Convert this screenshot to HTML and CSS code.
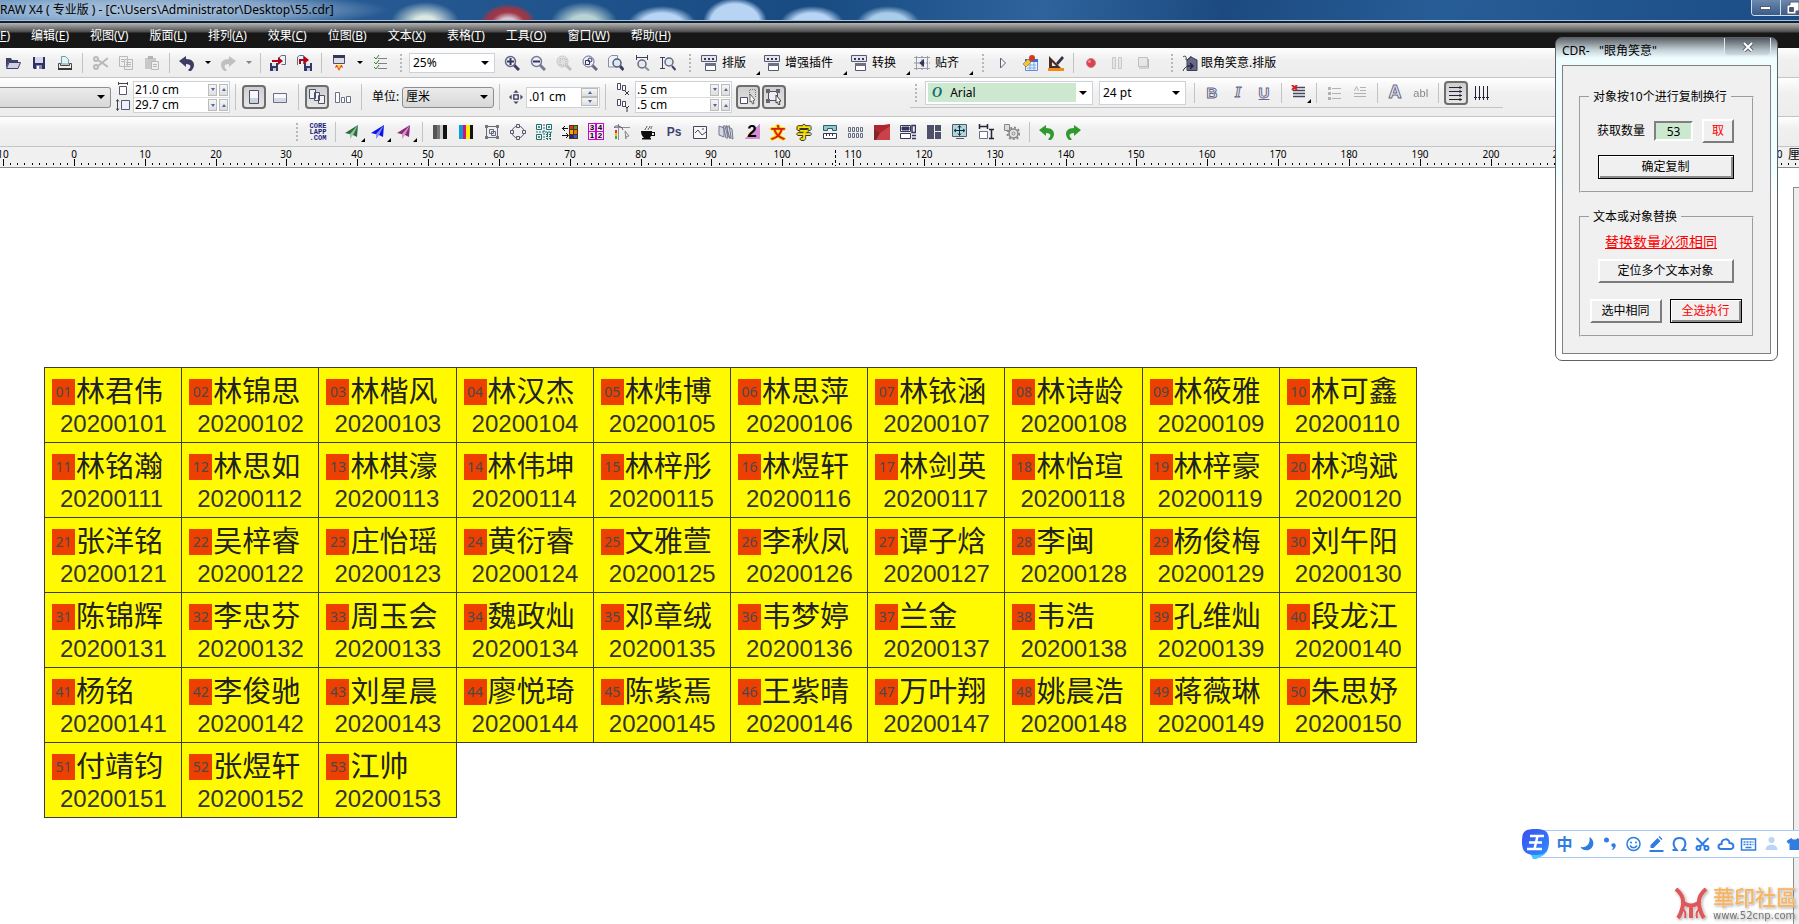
FILE: index.html
```html
<!DOCTYPE html>
<html lang="zh-CN">
<head>
    <meta charset="UTF-8">
    <meta name="viewport" content="width=device-width, initial-scale=1.0">
    <title>55.cdr</title>
    <link rel="stylesheet" href="styles.css">
</head>
<body>
    <header class="titlebar">
        <h1>RAW X4 ( 专业版 ) - [C:\Users\Administrator\Desktop\55.cdr]</h1>
        <div class="window-buttons">
            <button type="button" aria-label="最小化"><svg width="14" height="8" viewBox="0 0 14 8"><rect x="1.500" y="2.500" width="10" height="3" fill="#fff" stroke="#555c70"/></svg></button>
            <button type="button" aria-label="还原"><svg width="14" height="14" viewBox="0 0 14 14"><path d="M4 1h9v9h-3v3H1V4h3z" fill="#fff" stroke="#555c70"/><path d="M3.500 6.500h4v4h-4z" fill="#3b5c88" stroke="#555c70"/></svg></button>
        </div>
    </header>

    <nav class="menubar">
        <a href="#"><u>F</u>)</a>
        <a href="#">编辑(<u>E</u>)</a>
        <a href="#">视图(<u>V</u>)</a>
        <a href="#">版面(<u>L</u>)</a>
        <a href="#">排列(<u>A</u>)</a>
        <a href="#">效果(<u>C</u>)</a>
        <a href="#">位图(<u>B</u>)</a>
        <a href="#">文本(<u>X</u>)</a>
        <a href="#">表格(<u>T</u>)</a>
        <a href="#">工具(<u>O</u>)</a>
        <a href="#">窗口(<u>W</u>)</a>
        <a href="#">帮助(<u>H</u>)</a>
    </nav>

    <!-- 标准工具栏 -->
    <div class="toolbar toolbar-main">
        <button type="button" class="tool" aria-label="打开"><svg viewBox="0 0 16 16"><path d="M1 13V3h5l1 2h6v2H4L1 13z" fill="#3e4266"/><path d="M4 7.500h11.500L13 13.500H1.500z" fill="#cfd2e4" stroke="#3e4266"/></svg></button>
        <button type="button" class="tool" aria-label="保存"><svg viewBox="0 0 16 16"><path d="M2 2h12v12H3l-1-1z" fill="#2f3261"/><path d="M4 2h8v6H4z" fill="#d6d9ee"/><path d="M5 10h6v4H5z" fill="#8489b4"/><path d="M6 11h2v3H6z" fill="#fff"/></svg></button>
        <button type="button" class="tool" aria-label="打印"><svg viewBox="0 0 16 16"><path d="M4.500 9V1.500h4l3 3V9z" fill="#e3f2f2" stroke="#6b9ca5"/><path d="M1.500 8.500h2v2h9v-2h2v5h-13z" fill="#f3f0cf" stroke="#45454f"/><path d="M1 13h14v2H1z" fill="#33343f"/></svg></button>
        <span class="sep"></span>
        <button type="button" class="tool faded" aria-label="剪切"><svg viewBox="0 0 16 16" fill="none" stroke="#777" stroke-width="2"><circle cx="4" cy="4" r="2"/><circle cx="4" cy="12" r="2"/><path d="M6 5l10 7M6 11l10-8"/></svg></button>
        <button type="button" class="tool faded" aria-label="复制"><svg viewBox="0 0 16 16" fill="#eee" stroke="#777"><path d="M1.500 1.500h8v10h-8zM6.500 4.500h8v10h-8z"/><path d="M8 7.500h5M8 9.500h5M8 11.500h5M3 4.500h3M3 6.500h3"/></svg></button>
        <button type="button" class="tool faded" aria-label="粘贴"><svg viewBox="0 0 16 16"><path d="M1 3h11v11H1z" fill="#999"/><path d="M4 1h5v3H4z" fill="#666"/><path d="M7.500 6.500h7v8h-7z" fill="#eee" stroke="#777"/><path d="M9 9.500h4M9 11.500h4" stroke="#777"/></svg></button>
        <span class="sep"></span>
        <button type="button" class="tool" aria-label="撤消"><svg viewBox="0 0 16 16"><path d="M0 6l7-5v3c6 0 8 3 8 6 0 2-1 4-3 6-2 0-2 0-3-1 3-2 4-6-2-6v3z" fill="#3a3d60"/></svg></button>
        <button type="button" class="drop" aria-label="撤消列表"></button>
        <button type="button" class="tool faded" aria-label="重做"><svg viewBox="0 0 16 16"><path d="M16 6L9 1v3C3 4 1 7 1 10c0 2 1 4 3 6 2 0 2 0 3-1-3-2-4-6 2-6v3z" fill="#888"/></svg></button>
        <button type="button" class="drop faded" aria-label="重做列表"></button>
        <span class="sep"></span>
        <button type="button" class="tool" aria-label="导入"><svg viewBox="0 0 16 16"><path d="M9.500 6V2l2-1.500h4v9h-4" fill="#e5f4f5" stroke="#668"/><path d="M0 8h8v8H0z" fill="#343763"/><path d="M2 8h4v3H2z" fill="#e1e4f2"/><path d="M3 13h3v3H3z" fill="#bcd"/><path d="M2 7V5h6V2l5 4-5 4V7z" fill="#b80010"/></svg></button>
        <button type="button" class="tool" aria-label="导出"><svg viewBox="0 0 16 16"><path d="M1.500 10V2l2-1.500h4V9" fill="#e5f4f5" stroke="#668"/><path d="M8 8h8v8H8z" fill="#343763"/><path d="M10 8h4v3h-4z" fill="#e1e4f2"/><path d="M11 13h3v3h-3z" fill="#bcd"/><path d="M3 9V4h5V1l5 4-5 4V6H5v3z" fill="#b80010"/></svg></button>
        <span class="sep"></span>
        <button type="button" class="tool" aria-label="应用程序启动器"><svg viewBox="0 0 16 16"><path d="M2.500.500h11v8h-11z" fill="#dcdce4" stroke="#4b4d69"/><path d="M2 0h12v3H2z" fill="#35385a"/><path d="M5 10h6l1 3-2-1-2 4-2-4-2 1z" fill="#f04000"/><path d="M6 10h4l-2 4z" fill="#ffd42a"/></svg></button>
        <button type="button" class="drop" aria-label="启动器列表"></button>
        <button type="button" class="tool" aria-label="选项"><svg viewBox="0 0 16 16" fill="none"><path d="M6 3.500h9M6 8.500h9M6 13.500h9" stroke="#7b7f92"/><path d="M2 2l2 2 3-4M2 7l2 2 3-4M2 12l2 2 3-4" stroke="#3b7c2d"/></svg></button>
        <span class="grip grip-narrow"></span>
        <span class="combo combo-zoom"><select aria-label="缩放级别"><option>25%</option></select></span>
        <button type="button" class="tool" aria-label="放大"><svg viewBox="0 0 16 16" fill="none"><path d="M10 10l5 5" stroke="#3c3f63" stroke-width="3"/><circle cx="6.500" cy="6.500" r="5" fill="#eef" stroke="#666a80" stroke-width="1.500"/><path d="M3 6.500h7M6.500 3v7" stroke="#33365a" stroke-width="2"/></svg></button>
        <button type="button" class="tool" aria-label="缩小"><svg viewBox="0 0 16 16" fill="none"><path d="M10 10l5 5" stroke="#777b90" stroke-width="3"/><circle cx="6.500" cy="6.500" r="5" fill="#eef" stroke="#777b90" stroke-width="1.500"/><path d="M3 6.500h7" stroke="#33365a" stroke-width="2"/></svg></button>
        <button type="button" class="tool faded" aria-label="缩放选定"><svg viewBox="0 0 16 16" fill="none"><path d="M10 10l5 5" stroke="#888" stroke-width="3"/><circle cx="6.500" cy="6.500" r="5.500" fill="#ccc" stroke="#999"/><path d="M4 4h6v6H4z" stroke="#666" stroke-dasharray="1 1"/></svg></button>
        <button type="button" class="tool" aria-label="缩放全部"><svg viewBox="0 0 16 16" fill="none"><path d="M10 10l5 5" stroke="#666a80" stroke-width="3"/><circle cx="6.500" cy="6.500" r="5.500" fill="#eef" stroke="#666a80"/><path d="M3.500 5.500h4v4h-4z" stroke="#33365a"/><circle cx="8" cy="5" r="2" stroke="#33365a"/></svg></button>
        <button type="button" class="tool" aria-label="缩放页面"><svg viewBox="0 0 16 16" fill="none"><path d="M.500 12V3l3-2.500h6V12z" fill="#eef3f7" stroke="#8a90a4"/><path d="M12 11l3.500 4" stroke="#3c3f63" stroke-width="3"/><circle cx="9" cy="8" r="4" fill="#dce8f2" stroke="#555a72" stroke-width="1.500"/></svg></button>
        <button type="button" class="tool" aria-label="按页宽缩放"><svg viewBox="0 0 16 16" fill="none"><path d="M2 2.500h12M2.500 0v5M13.500 0v5" stroke="#3c3f63"/><path d="M11 12l4 3.500" stroke="#8a8ea0" stroke-width="2"/><circle cx="8" cy="9" r="4" fill="#e5eaf2" stroke="#666a80" stroke-width="1.500"/></svg></button>
        <button type="button" class="tool" aria-label="按页高缩放"><svg viewBox="0 0 16 16" fill="none"><path d="M2.500 2v12M0 2.500h5M0 13.500h5" stroke="#3c3f63"/><path d="M12 11l3.500 4" stroke="#3c3f63" stroke-width="2"/><circle cx="9" cy="7" r="4" fill="#e5eaf2" stroke="#666a80" stroke-width="1.500"/></svg></button>
        <span class="grip"></span>
        <button type="button" class="macro"><svg viewBox="0 0 16 16" fill="none"><path d="M.500.500h15v6H.500z" fill="#e4e5ed" stroke="#55586e"/><path d="M3 3h2v2H3zM7 3h2v2H7zM11 3h2v2h-2z" fill="#33365a"/><path d="M4.500 8.500h10v7h-10z" fill="#fff" stroke="#55586e"/><path d="M4 8h11v3H4z" fill="#6d7188"/></svg>排版<i class="corner"></i></button>
        <button type="button" class="macro"><svg viewBox="0 0 16 16" fill="none"><path d="M.500.500h15v6H.500z" fill="#e4e5ed" stroke="#55586e"/><path d="M3 3h2v2H3zM7 3h2v2H7zM11 3h2v2h-2z" fill="#33365a"/><path d="M4.500 8.500h10v7h-10z" fill="#fff" stroke="#55586e"/><path d="M4 8h11v3H4z" fill="#6d7188"/></svg>增强插件<i class="corner"></i></button>
        <button type="button" class="macro"><svg viewBox="0 0 16 16" fill="none"><path d="M.500.500h15v6H.500z" fill="#e4e5ed" stroke="#55586e"/><path d="M3 3h2v2H3zM7 3h2v2H7zM11 3h2v2h-2z" fill="#33365a"/><path d="M4.500 8.500h10v7h-10z" fill="#fff" stroke="#55586e"/><path d="M4 8h11v3H4z" fill="#6d7188"/></svg>转换<i class="corner"></i></button>
        <button type="button" class="macro"><svg viewBox="0 0 16 16" fill="none"><path d="M2.500 1v14M13.500 1v14M0 2.500h16M0 13.500h16" stroke="#9a9cae"/><path d="M8 1v14M0 8h16" stroke="#8a8da0" stroke-dasharray="2 1"/><path d="M10 4v8L5 8z" fill="#33365a"/></svg>贴齐<i class="corner"></i></button>
        <span class="grip grip-narrow"></span>
        <button type="button" class="tool" aria-label="播放"><svg viewBox="0 0 16 16"><path d="M4.500 3l5 5-5 5z" fill="#f4f4fa" stroke="#5d6078"/></svg></button>
        <button type="button" class="tool" aria-label="编辑宏"><svg viewBox="0 0 16 16"><path d="M3.500 4.500h12v11h-12z" fill="#e8f1ff" stroke="#5b8fd8"/><path d="M3 4h13v3H3z" fill="#2f6fd0"/><path d="M5 10h9M5 13h9M8 7v8M12 7v8" stroke="#7fa8e0"/><circle cx="10" cy="3" r="3" fill="#d8381c"/><path d="M1 9l5-5 3 3-5 5z" fill="#f2c53c" stroke="#a9791a" stroke-width=".700"/></svg></button>
        <button type="button" class="tool" aria-label="宏编辑器"><svg viewBox="0 0 16 16"><path d="M1 13V1l12 12zM4 7v4h4z" fill="#4a2b24" fill-rule="evenodd"/><path d="M8 8l6-7 2 2-6 7z" fill="#303440"/><path d="M0 13h16v3H0z" fill="#f08a10"/></svg></button>
        <span class="sep"></span>
        <button type="button" class="tool" aria-label="录制"><svg viewBox="0 0 16 16"><circle cx="8" cy="8" r="4.500" fill="#e23f4c" stroke="#b98a92"/><circle cx="6.500" cy="6.500" r="1.500" fill="#f58a90"/></svg></button>
        <button type="button" class="tool faded" aria-label="暂停"><svg viewBox="0 0 16 16" fill="#ddd" stroke="#999"><path d="M3.500 2.500h3v11h-3zM9.500 2.500h3v11h-3z"/></svg></button>
        <button type="button" class="tool faded" aria-label="停止"><svg viewBox="0 0 16 16"><path d="M3.500 2.500h9v9h-9z" fill="#ddd" stroke="#888"/><path d="M4 13h9.500V4" fill="none" stroke="#777"/></svg></button>
        <span class="grip grip-wide"></span>
        <button type="button" class="macro macro-tag"><svg viewBox="0 0 16 16" fill="none"><path d="M5 5l4-3 6 3v10.500H5z" fill="#666a86" stroke="#3c3f58"/><path d="M6 11h4M8 8l3 3-3 3" stroke="#22243c" stroke-width="1.500"/><path d="M1 2c2-2 4 0 3 2s4 0 5-3M1 16c1-3 3-4 5-5" stroke="#333"/></svg>眼角笑意.排版</button>
    </div>

    <!-- 属性栏 -->
    <div class="toolbar toolbar-props">
        <span class="combo combo-paper"><select aria-label="纸张类型"><option></option></select></span>
        <div class="pair-icons">
            <svg viewBox="0 0 14 14"><path d="M2.500 1.500h9M2.500 0v3M11.500 0v3" stroke="#444" fill="none"/><path d="M3.500 4.500h7v8h-7z" fill="#fff" stroke="#55586e"/></svg>
            <svg viewBox="0 0 14 14"><path d="M1.500 2v10M0 3.500l1.500-2L3 3.500M0 10.500l1.500 2 1.500-2" stroke="#444" fill="none"/><path d="M5.500 2.500h8v9h-8z" fill="#eef" stroke="#55586e"/></svg>
        </div>
        <div class="pair-fields">
            <div class="spin-field"><input type="text" value="21.0 cm" aria-label="纸张宽度"><button type="button" class="spin down" aria-label="减小宽度"></button><button type="button" class="spin up" aria-label="增大宽度"></button></div>
            <div class="spin-field"><input type="text" value="29.7 cm" aria-label="纸张高度"><button type="button" class="spin down" aria-label="减小高度"></button><button type="button" class="spin up" aria-label="增大高度"></button></div>
        </div>
        <span class="sep sep-tall"></span>
        <button type="button" class="tool pressed" aria-label="纵向"><svg viewBox="0 0 16 16"><path d="M3.500 1.500h9v13h-9z" fill="#f6f8fb" stroke="#4c4f68"/><path d="M4 9h8v5H4z" fill="#ccd2da"/></svg></button>
        <button type="button" class="tool" aria-label="横向"><svg viewBox="0 0 16 16"><path d="M1.500 4.500h13v9h-13z" fill="#f6f8fb" stroke="#6b6e88"/><path d="M2 9h12v4H2z" fill="#d6dae2"/></svg></button>
        <span class="sep sep-tall"></span>
        <button type="button" class="tool pressed" aria-label="所有页面"><svg viewBox="0 0 16 16" fill="#f1f2f6" stroke="#4c4f68"><path d="M.500.500h6v9h-6zM5.500 3.500h5v8h-5zM9.500 6.500h6v8h-6z"/></svg></button>
        <button type="button" class="tool" aria-label="当前页面"><svg viewBox="0 0 16 16" fill="#fff" stroke="#6b6e88"><path d="M.500 3.500h4v10h-4zM6.500 8.500h3v5h-3zM11.500 7.500h4v6h-4z"/></svg></button>
        <span class="sep sep-tall"></span>
        <label for="unit" class="unit-label">单位:</label>
        <span class="combo combo-unit"><select id="unit"><option>厘米</option></select></span>
        <span class="sep sep-tall"></span>
        <div class="nudge-icon"><svg width="14" height="14" viewBox="0 0 16 16"><path d="M5.500 5.500h5v5h-5z" fill="none" stroke="#33365a" stroke-width="1.500"/><path d="M8 0l3 3H5zM8 16l3-3H5zM0 8l3-3v6zM16 8l-3-3v6z" fill="#44475f"/></svg></div>
        <div class="nudge"><input type="text" value=".01 cm" aria-label="微调偏移"><div class="spin-stack"><button type="button" class="spin up" aria-label="增大微调"></button><button type="button" class="spin down" aria-label="减小微调"></button></div></div>
        <span class="sep sep-tall"></span>
        <div class="pair-icons pair-icons-wide">
            <svg viewBox="0 0 14 14"><path d="M1.500 1.500h3v6h-3zM6.500 3.500h3v5h-3z" fill="#fff" stroke="#44475f"/><path d="M9 9l4 4M13 9l-4 4" stroke="#333"/></svg>
            <svg viewBox="0 0 14 14"><path d="M1.500 1.500h3v6h-3zM6.500 3.500h3v5h-3z" fill="#fff" stroke="#44475f"/><path d="M9 8l2 2 2-2M11 10v4" stroke="#333" fill="none"/></svg>
        </div>
        <div class="pair-fields">
            <div class="spin-field"><input type="text" value=".5 cm" aria-label="再制距离 X"><button type="button" class="spin down" aria-label="减小 X"></button><button type="button" class="spin up" aria-label="增大 X"></button></div>
            <div class="spin-field"><input type="text" value=".5 cm" aria-label="再制距离 Y"><button type="button" class="spin down" aria-label="减小 Y"></button><button type="button" class="spin up" aria-label="增大 Y"></button></div>
        </div>
        <button type="button" class="tool pressed pressed-first" aria-label="绘制时移动"><svg viewBox="0 0 16 16" fill="none"><path d="M.500 8.500h7v6h-7z" fill="#fff" stroke="#4c4f68"/><path d="M9.500 6V.500h6v8" stroke="#777" stroke-dasharray="1 1"/><path d="M10 5l5 6-2 .500 1 3-1.500.500-1-3L10 13z" fill="#fff" stroke="#666"/></svg></button>
        <button type="button" class="tool pressed" aria-label="视为已填充"><svg viewBox="0 0 16 16" fill="none"><path d="M2.500 2.500h9v9h-9z" fill="#eee" stroke="#4c4f68"/><path d="M0 0h4v4H0zM10 0h4v4h-4zM0 10h4v4H0z" fill="#667"/><path d="M10 6l5 6-2 .500 1 3-1.500.500-1-3L10 14z" fill="#fff" stroke="#444"/></svg></button>

        <div class="text-bar">
            <span class="grip"></span>
            <span class="combo combo-font"><b>O</b><select aria-label="字体"><option>Arial</option></select></span>
            <span class="combo combo-size"><select aria-label="字号"><option>24 pt</option></select></span>
            <span class="sep"></span>
            <button type="button" class="tool letter outline bold" aria-label="粗体">B</button>
            <button type="button" class="tool letter outline slant" aria-label="斜体">I</button>
            <button type="button" class="tool letter outline under" aria-label="下划线">U</button>
            <span class="sep"></span>
            <button type="button" class="tool has-corner" aria-label="对齐"><svg viewBox="0 0 16 16" fill="none"><path d="M4 2.500h10M2 5.500h12M2 8.500h12M2 11.500h12" stroke="#44475f" stroke-width="1.500"/><path d="M1 0l5 5M6 0L1 5" stroke="#e02020" stroke-width="2"/></svg><i class="corner"></i></button>
            <span class="sep"></span>
            <button type="button" class="tool faded" aria-label="项目符号"><svg viewBox="0 0 16 16" fill="none" stroke="#666"><path d="M6 3.500h9M6 8.500h9M6 13.500h9"/><path d="M2 3.500h3M2 8.500h3M2 13.500h3" stroke-width="3"/></svg></button>
            <button type="button" class="tool faded" aria-label="首字下沉"><svg viewBox="0 0 16 16" fill="none" stroke="#666"><path d="M8 2.500h6M8 5.500h6M2 8.500h12M2 11.500h12"/><path d="M2.500 6l2-4.500 2 4.500"/></svg></button>
            <span class="sep"></span>
            <button type="button" class="tool letter outline wide-a" aria-label="字符格式">A</button>
            <button type="button" class="tool letter faded" aria-label="编辑文本">abI</button>
            <span class="sep"></span>
            <button type="button" class="tool pressed" aria-label="水平文本"><svg viewBox="0 0 16 16" fill="none" stroke="#22243c"><path d="M1 2.500h13M1 6.500h13M1 10.500h13M1 14.500h13"/><path d="M12 1v3M12 5v3M12 9v3M12 13v3"/></svg></button>
            <button type="button" class="tool" aria-label="垂直文本"><svg viewBox="0 0 16 16" fill="none" stroke="#22243c"><path d="M1.500 1v14M5.500 1v14M9.500 1v14M13.500 1v14"/><path d="M0 12.500h3M4 12.500h3M8 12.500h3M12 12.500h3"/></svg></button>
        </div>
    </div>

    <!-- 插件工具栏 -->
    <div class="toolbar toolbar-plugins">
        <span class="grip grip-narrow"></span>
        <button type="button" class="tool corelapp">CORE<br>LAPP<br>.COM</button>
        <span class="sep"></span>
        <button type="button" class="tool has-corner" aria-label="绿色飞机"><svg viewBox="0 0 16 16"><path d="M0 9L13 1l-1 12-4-2z" fill="#2d6e3f"/><path d="M13 1L5 10v5l3-4z" fill="#9cc7a4"/></svg><i class="corner"></i></button>
        <button type="button" class="tool has-corner" aria-label="蓝色飞机"><svg viewBox="0 0 16 16"><path d="M0 9L13 1l-1 12-4-2z" fill="#0a14e6"/><path d="M13 1L5 10v5l3-4z" fill="#8a90ff"/></svg><i class="corner"></i></button>
        <button type="button" class="tool has-corner" aria-label="紫色飞机"><svg viewBox="0 0 16 16"><path d="M0 9L13 1l-1 12-4-2z" fill="#8d2a7c"/><path d="M13 1L5 10v5l3-4z" fill="#cf9ac6"/></svg><i class="corner"></i></button>
        <span class="sep"></span>
        <button type="button" class="tool" aria-label="灰度"><svg viewBox="0 0 16 16"><path d="M1 1h4v14H1z" fill="#555"/><path d="M5 1h3v14H5z" fill="#777"/><path d="M8 1h3v14H8z" fill="#ccc"/><path d="M11 1h4v14h-4z" fill="#111"/></svg></button>
        <button type="button" class="tool" aria-label="CMYK"><svg viewBox="0 0 16 16"><path d="M1 1h4v14H1z" fill="#0a9bd8"/><path d="M5 1h3v14H5z" fill="#d5127c"/><path d="M8 1h4v14H8z" fill="#fff000"/><path d="M12 1h3v14h-3z" fill="#111"/></svg></button>
        <button type="button" class="tool" aria-label="群组"><svg viewBox="0 0 16 16" fill="none" stroke="#666a80"><path d="M2 2.500h12M2 13.500h12M2.500 2v12M13.500 2v12"/><path d="M1 1h3v3H1zM12 1h3v3h-3zM1 12h3v3H1zM12 12h3v3h-3z" fill="#777" stroke="none"/><path d="M5.500 5.500h4v4h-4zM7.500 7.500h4v4h-4z"/></svg></button>
        <button type="button" class="tool" aria-label="圆形"><svg viewBox="0 0 16 16" fill="none" stroke="#55586e"><circle cx="8" cy="8" r="6"/><path d="M6.500.500h3v3h-3zM6.500 12.500h3v3h-3zM.500 6.500h3v3h-3zM12.500 6.500h3v3h-3z" fill="#eee"/></svg></button>
        <button type="button" class="tool" aria-label="二维码"><svg viewBox="0 0 16 16" fill="none" stroke="#1d6e6e"><path d="M.500.500h5v5h-5zM10.500.500h5v5h-5zM.500 10.500h5v5h-5z"/><path d="M2.500 2.500h1v1h-1zM12.500 2.500h1v1h-1zM2.500 12.500h1v1h-1z"/><path d="M8 0v16M0 8h16M10 10.500h6M10 12.500h6M10 14.500h6M11.500 8v8M14.500 8v8" stroke-dasharray="2 1"/></svg></button>
        <button type="button" class="tool" aria-label="颜色替换"><svg viewBox="0 0 16 16"><path d="M0 4.500h6M3 2L.500 4.500 3 7M0 11.500h6M4 9l2.500 2.500L4 14" fill="none" stroke="#111"/><path d="M7 1h9v14H7z" fill="#553018"/><path d="M8 2h3v3H8z" fill="#e03020"/><path d="M12 2h3v3h-3z" fill="#50a030"/><path d="M8 6h3v4H8z" fill="#f0b000"/><path d="M12 6h3v4h-3z" fill="#e07a10"/><path d="M8 11h3v3H8z" fill="#2a2090"/><path d="M12 11h3v3h-3z" fill="#2b60d0"/></svg></button>
        <button type="button" class="tool numbers" aria-label="编号"><span>3</span><span>4</span><span>1</span><span>2</span></button>
        <button type="button" class="tool" aria-label="辅助线"><svg viewBox="0 0 16 16" fill="none"><path d="M0 3.500h16M4.500 0v16" stroke="#8a8da0"/><path d="M0 4c0-3 8-3 9 2" stroke="#556"/><path d="M1 6h2v3H1z" fill="#e03030"/><path d="M1 9h2v3H1z" fill="#f0c000"/><path d="M1 12h2v3H1z" fill="#30b040"/><path d="M11 7l4 5-3 .500V15z" fill="#eee" stroke="#888"/></svg></button>
        <button type="button" class="tool" aria-label="咖啡"><svg viewBox="0 0 16 16"><path d="M1 7h11v1h3v4h-4l-1 2H4c-2-2-3-4-3-7zm11 2v2h2V9z" fill="#0b0b0b" fill-rule="evenodd"/><path d="M2 14h9v1.500H2z" fill="#0b0b0b"/><path d="M5 6c0-2 2-2 2-4M8 6c0-2 2-2 2-4M11 5c0-2 1-2 1-3" fill="none" stroke="#555"/></svg></button>
        <button type="button" class="tool letter ps">Ps</button>
        <button type="button" class="tool" aria-label="位图"><svg viewBox="0 0 16 16" fill="none" stroke="#44475f"><path d="M1.500 2.500h13v12h-13z" fill="#f8f8f8"/><path d="M3 9l3-3 4 5 4-3"/><path d="M10 5h2"/></svg></button>
        <button type="button" class="tool" aria-label="镜像"><svg viewBox="0 0 16 16" fill="none" stroke="#74788f"><path d="M1 2l5 2v9L1 11zM8 14L5 2h2l3 12zM9 2l5 3 1 10-5-3z" fill="#d5d8e4"/><path d="M8 1l4 14M11 1l2 12"/></svg></button>
        <button type="button" class="tool letter two" aria-label="工具 2">2</button>
        <button type="button" class="tool letter wen">文</button>
        <button type="button" class="tool letter zi">字</button>
        <button type="button" class="tool" aria-label="测量"><svg viewBox="0 0 16 16" fill="none"><path d="M1.500 6.500v-5h13v5h-4v-2h-5v2z" fill="#8fcaca" stroke="#2d5f68"/><path d="M1.500 9.500h13v5h-13z" fill="#fff" stroke="#33365a"/><path d="M4.500 10v2M7.500 10v2M10.500 10v2" stroke="#33365a"/></svg></button>
        <button type="button" class="tool" aria-label="阵列"><svg viewBox="0 0 16 16" fill="none" stroke="#666a80"><path d="M.500 3.500h2v4h-2zM4.500 3.500h2v4h-2zM8.500 3.500h2v4h-2zM12.500 3.500h2v4h-2zM.500 9.500h2v4h-2zM4.500 9.500h2v4h-2zM8.500 9.500h2v4h-2zM12.500 9.500h2v4h-2z"/></svg></button>
        <button type="button" class="tool" aria-label="红旗"><svg viewBox="0 0 16 16"><path d="M0 1h16v15H0z" fill="#c8414b"/><path d="M0 1h9l7-1v2L6 9 0 5z" fill="#b0242f"/><path d="M0 5l6 4-4 7H0z" fill="#7f252c"/></svg></button>
        <button type="button" class="tool" aria-label="版式"><svg viewBox="0 0 16 16" fill="none" stroke="#33365a"><path d="M.500 1.500h10v6H.500zM.500 9.500h10v5H.500z" fill="#fff"/><path d="M2 3h7v3H2z" fill="#33365a"/><path d="M12 1.500h3.500v7H12zM12 11.500h4M12 14.500h4" stroke-width="1.500"/></svg></button>
        <button type="button" class="tool" aria-label="拼版"><svg viewBox="0 0 16 16" fill="#4d5068"><path d="M1 1h7v14H1zM9 1h6v6H9zM9 8h6v7H9z"/></svg></button>
        <button type="button" class="tool" aria-label="居中"><svg viewBox="0 0 16 16" fill="none"><path d="M.500.500h14v12H.500z" fill="#a9dada" stroke="#55586e"/><path d="M7.500 2v9M3 6.500h9M6 3.500l1.500-2 1.500 2M6 9.500l1.500 2 1.500-2M4 5L2 6.500 4 8M11 5l2 1.500L11 8" stroke="#22243c"/><path d="M4 14.500h8" stroke="#55586e"/></svg></button>
        <button type="button" class="tool" aria-label="尺寸"><svg viewBox="0 0 16 16" fill="none" stroke="#22243c"><path d="M1.500 0v5M9.500 0v5M1 2.500h9" stroke-width="1.500"/><path d="M1.500 7.500h8v7h-8z" fill="#fff" stroke="#6b6e88"/><path d="M11 5.500h5M11 14.500h5M13.500 6v8" stroke-width="1.500"/></svg></button>
        <button type="button" class="tool" aria-label="设置"><svg viewBox="0 0 16 16" fill="none" stroke="#888"><path d="M.500.500h5v6h-5z" fill="#ddd"/><circle cx="9.500" cy="9.500" r="4.500" fill="#e4e4e4" stroke-width="1.500"/><circle cx="9.500" cy="9.500" r="6" stroke-width="2" stroke-dasharray="2 2"/><circle cx="9.500" cy="9.500" r="1.500"/></svg></button>
        <span class="sep"></span>
        <button type="button" class="tool" aria-label="后退"><svg viewBox="0 0 16 16"><path d="M0 6l7-5v3c6 0 8 3 8 6 0 2-1 4-3 6-2 0-2 0-3-1 3-2 4-6-2-6v3z" fill="#2f9b2f"/></svg></button>
        <button type="button" class="tool" aria-label="前进"><svg viewBox="0 0 16 16"><path d="M16 6L9 1v3C3 4 1 7 1 10c0 2 1 4 3 6 2 0 2 0 3-1-3-2-4-6 2-6v3z" fill="#2f9b2f"/></svg></button>
    </div>

    <svg class="ruler" id="ruler" height="21"></svg>

    <main class="workspace">
        <div class="canvas">
            <div class="cards" id="cards"></div>
        </div>
        <aside class="docker"></aside>
    </main>

    <!-- 宏窗口 -->
    <section class="dialog">
        <div class="dialog-title">
            <h2>CDR- &nbsp; "眼角笑意"</h2>
            <button type="button" class="dialog-close" aria-label="关闭"><svg width="12" height="10" viewBox="0 0 12 10"><path d="M2 1l8 8M10 1L2 9" stroke="#5b6270" stroke-width="4"/><path d="M2 1l8 8M10 1L2 9" stroke="#fff" stroke-width="2"/></svg></button>
        </div>
        <form class="dialog-body">
            <fieldset>
                <legend>对象按10个进行复制换行</legend>
                <div class="count-row">
                    <label for="count">获取数量</label>
                    <input type="text" id="count" value="53">
                    <button type="button" class="btn red">取</button>
                </div>
                <button type="button" class="btn btn-wide default">确定复制</button>
            </fieldset>
            <fieldset>
                <legend>文本或对象替换</legend>
                <a href="#" class="notice">替换数量必须相同</a>
                <button type="button" class="btn btn-wide">定位多个文本对象</button>
                <div class="btn-row">
                    <button type="button" class="btn">选中相同</button>
                    <button type="button" class="btn red default">全选执行</button>
                </div>
            </fieldset>
        </form>
    </section>

    <!-- 输入法状态栏 -->
    <div class="ime">
        <svg class="ime-logo" viewBox="0 0 27 30"><defs><linearGradient id="imeFill" x1="0" y1="0" x2="1" y2="1"><stop offset="0" stop-color="#3a4ff0"/><stop offset="1" stop-color="#2f8cff"/></linearGradient></defs><path d="M8 24h15l3-4c-1 5-7 8-12 10H11z" fill="#45c8ff"/><path d="M13 0c10 0 14 2 14 12s-3 14-13 14S0 23 0 13 2 0 13 0z" fill="url(#imeFill)"/><path d="M8 7h14M7 13.500h13M5 20h15M15.500 7l-3 13" stroke="#fff" stroke-width="2.500" fill="none"/></svg>
        <div class="ime-icons">
            <span class="ime-lang">中</span>
            <svg viewBox="0 0 16 16"><path d="M10 1c5 3 5 9 1 12-3 2-8 2-10-2 6 1 10-3 9-10z"/></svg>
            <svg viewBox="0 0 16 16"><circle cx="4" cy="4" r="2.500"/><path d="M9 8c3-2 5 0 4 3-1 2-2 3-4 3 1-1 2-2 1.500-3-1 0-2-1-1.500-3z"/></svg>
            <svg viewBox="0 0 16 16"><circle cx="8" cy="8" r="6.500" fill="none" stroke="#2f7de1" stroke-width="1.500"/><circle cx="5.500" cy="6.500" r="1"/><circle cx="10.500" cy="6.500" r="1"/><path d="M4.500 9.500c2 3 5 3 7 0" fill="none" stroke="#2f7de1" stroke-width="1.500"/></svg>
            <svg viewBox="0 0 16 16"><path d="M2 12V9l7-7 3 3-7 7zM10 1l1-1 3 3-1 1zM1 14h14v2H1z"/></svg>
            <svg viewBox="0 0 16 16"><path d="M1 14h4C0 8 2 2 8 2s8 6 3 12h4" fill="none" stroke="#2f7de1" stroke-width="2"/></svg>
            <svg viewBox="0 0 16 16"><g fill="none" stroke="#2f7de1" stroke-width="2"><path d="M2 2l9 9M14 2l-9 9"/><circle cx="4" cy="12" r="2"/><circle cx="12" cy="12" r="2"/></g></svg>
            <svg viewBox="0 0 16 16"><path d="M4 13c-4 0-4-5 0-5 0-6 8-6 8-1 5 0 5 6 1 6z" fill="none" stroke="#2f7de1" stroke-width="2"/></svg>
            <svg viewBox="0 0 16 16"><path d="M1 3h14v11H1z" fill="none" stroke="#2f7de1" stroke-width="1.500"/><path d="M3 6h10M3 8.500h10" stroke="#2f7de1" stroke-width="1.500" stroke-dasharray="2 1"/><path d="M5 11.500h6" stroke="#2f7de1" stroke-width="1.500"/></svg>
            <svg viewBox="0 0 16 16" class="ime-user"><circle cx="8" cy="4" r="3"/><path d="M2 14c0-7 12-7 12 0z"/></svg>
            <svg viewBox="0 0 16 16"><path d="M5 2c1 2 5 2 6 0l5 3-2 3-1-1v7H3V7L2 8 0 5z"/></svg>
        </div>
    </div>

    <div class="watermark">
        <svg width="36" height="32" viewBox="0 0 36 32" fill="none" stroke="#e0575a"><path d="M3 1c6 5 8 10 7 16-1 5-2 9-5 13M33 1c-6 5-8 10-7 16 1 5 2 9 5 13" stroke-width="4"/><path d="M9 13c5 6 13 6 18 0M18 19v11" stroke-width="4"/><path d="M9 20c4 3 4 6 3 10M27 20c-4 3-4 6-3 10" stroke-width="2"/></svg>
        <div>
            <strong>華印社區</strong>
            <span>www.52cnp.com</span>
        </div>
    </div>

    <script src="script.js"></script>
</body>
</html>
```
FILE: styles.css
```css
* {
    box-sizing: border-box;
}
body {
    margin: 0;
    height: 100vh;
    display: flex;
    flex-direction: column;
    position: relative;
    overflow: hidden;
    background: #fff;
    color: #000;
    font-family: "Noto Sans", "Noto Sans CJK SC", sans-serif;
    font-size: 12px;
    line-height: 16px;
}
button, input, select {
    margin: 0;
    padding: 0;
    border: none;
    background: none;
    color: inherit;
    font: inherit;
    border-radius: 0;
}
select {
    appearance: none;
}

/* 标题栏 */
.titlebar {
    height: 21px;
    flex: none;
    display: flex;
    justify-content: space-between;
    border-bottom: 1px solid #9cc4e8;
    background:
        radial-gradient(ellipse 230px 18px at 160px 10px, rgba(220, 232, 244, 0.7), rgba(200, 218, 236, 0.5) 60%, transparent),
        radial-gradient(ellipse 34px 20px at 425px 22px, #dbe7e0 30%, transparent),
        radial-gradient(ellipse 28px 20px at 508px 24px, #d7c5d2 30%, #a03848 60%, #93384c 80%, transparent),
        radial-gradient(ellipse 34px 22px at 584px 24px, #b9d3d3 40%, transparent),
        radial-gradient(ellipse 34px 18px at 662px 24px, #b8d4f4 60%, transparent),
        radial-gradient(ellipse 32px 24px at 735px 22px, #b8d4f4 75%, transparent),
        radial-gradient(ellipse 32px 18px at 812px 24px, #b8d4f4 60%, transparent),
        radial-gradient(ellipse 32px 18px at 888px 24px, #a9cce8 60%, transparent),
        linear-gradient(100deg, #6590bd, #275a93 20%, #174b82 45%, #2e639b 58%, #1c4a80 68%, #275d96 80%, #1b4c85);
}
.titlebar h1 {
    margin: 0;
    font-size: 12px;
    font-weight: 400;
    line-height: 20px;
}
.window-buttons {
    display: flex;
    height: 16px;
    border: 1px solid #cfdded;
    border-width: 0 0 1px 1px;
    border-radius: 0 0 0 4px;
    overflow: hidden;
    width: 48px;
}
.window-buttons button {
    flex: 0 0 29px;
    display: flex;
    align-items: center;
    justify-content: center;
    background: linear-gradient(#6b88ae, #3b5c88);
    border-right: 1px solid #cfdded;
}
.window-buttons button + button {
    flex-basis: 24px;
}

/* 菜单 */
.menubar {
    flex: none;
    height: 27px;
    display: flex;
    align-items: center;
    gap: 21px;
    border-top: 2px solid #17212b;
    background: linear-gradient(#b5b5b5, #4a4a4a 9px, #171717 10px);
}
.menubar a {
    color: #fff;
    text-decoration: none;
}

/* 工具栏 */
.toolbar {
    flex: none;
    display: flex;
    align-items: center;
    background: linear-gradient(#fff, #f0f0f0 40%, #ededed);
    border-bottom: 1px solid #c4c4c4;
}
.toolbar-main {
    height: 30px;
}
.toolbar-props {
    height: 39px;
}
.toolbar-plugins {
    height: 30px;
    padding-left: 289px;
}
.tool {
    position: relative;
    flex: none;
    width: 26px;
    height: 24px;
    display: flex;
    align-items: center;
    justify-content: center;
}
.tool svg, .macro svg {
    width: 16px;
    height: 16px;
    flex: none;
}
.faded {
    opacity: 0.45;
}
.pressed {
    width: 24px;
    margin: 0 1px;
    border: 2px solid #6e6e6e;
    border-radius: 4px;
    background: linear-gradient(#cfcfcf, #e6e6e6);
}
.pressed-first {
    margin-left: 4px;
}
.sep {
    flex: none;
    width: 9px;
    height: 20px;
    background: linear-gradient(#c3c3c3, #c3c3c3) center / 1px 100% no-repeat;
}
.sep-tall {
    height: 26px;
    width: 11px;
}
.grip {
    flex: none;
    width: 18px;
    height: 18px;
    background: repeating-linear-gradient(#b8b8b8 0 2px, transparent 2px 4px) center / 2px 100% no-repeat;
}
.grip-narrow {
    width: 16px;
}
.grip-wide {
    width: 24px;
    background-position-x: 15px;
}
.drop {
    flex: none;
    width: 15px;
    height: 20px;
    display: flex;
    align-items: center;
    justify-content: center;
}
.drop::after, .combo::after {
    content: "";
    border: 4px solid transparent;
    border-width: 4px 4px 0;
    border-top-color: #000;
}
.drop::after {
    border-width: 3px 3px 0;
}
.combo {
    flex: none;
    display: flex;
    align-items: center;
    padding-right: 5px;
    background: #fff;
    border: 1px solid #cdd1da;
}
.combo select {
    flex: 1;
    min-width: 0;
    height: 100%;
    padding-left: 3px;
}
.combo-zoom {
    width: 86px;
    height: 20px;
    margin-right: 4px;
}
.combo-paper, .combo-unit {
    height: 21px;
    border: 1px solid #8e8e8e;
    border-radius: 3px;
    background: linear-gradient(#ebebeb, #d8d8d8);
}
.combo-paper {
    width: 111px;
    border-left: none;
    border-radius: 0 3px 3px 0;
}
.combo-unit {
    width: 92px;
}
.macro {
    flex: none;
    display: flex;
    align-items: center;
    position: relative;
    height: 24px;
    padding: 0 16px 0 2px;
    gap: 5px;
}
.macro-tag {
    gap: 3px;
}
.corner {
    position: absolute;
    right: 2px;
    bottom: 0;
    border: 2px solid #000;
    border-top-color: transparent;
    border-left-color: transparent;
}
.has-corner .corner {
    right: 1px;
    bottom: 2px;
}

/* 属性栏数值框 */
.pair-icons {
    display: flex;
    flex-direction: column;
    gap: 2px;
    padding: 0 3px 0 5px;
}
.pair-icons-wide {
    padding: 0 5px;
}
.pair-icons svg {
    width: 14px;
    height: 14px;
}
.pair-fields {
    width: 97px;
    border: 1px solid #cdd1da;
    background: #fff;
}
.spin-field {
    height: 15px;
    display: flex;
    align-items: center;
    gap: 2px;
    padding: 0 1px;
}
.spin-field + .spin-field {
    border-top: 1px solid #dcdcdc;
}
.spin-field input {
    flex: 1;
    min-width: 0;
    height: 14px;
}
.spin {
    width: 9px;
    height: 12px;
    display: flex;
    align-items: center;
    justify-content: center;
    border: 1px solid #bbb;
    background: linear-gradient(#f6f6f6, #dedede);
}
.spin::after {
    content: "";
    border: 2px solid transparent;
}
.spin.down::after {
    border-bottom: none;
    border-top: 3px solid #4b66a8;
}
.spin.up::after {
    border-top: none;
    border-bottom: 3px solid #4b66a8;
}
.unit-label {
    width: 35px;
    padding-left: 5px;
}
.nudge-icon {
    display: flex;
    padding: 0 3px 0 4px;
}
.nudge {
    width: 74px;
    height: 21px;
    display: flex;
    align-items: center;
    padding: 0 1px 0 2px;
    border: 1px solid #cdd1da;
    background: #fff;
}
.nudge input {
    flex: 1;
    min-width: 0;
}
.spin-stack .spin {
    width: 17px;
    height: 9px;
}

/* 文本工具栏 */
.text-bar {
    display: flex;
    align-items: center;
    align-self: flex-start;
    height: 30px;
    margin-left: 123px;
    padding-right: 8px;
    border-bottom: 1px solid #c4c4c4;
}
.text-bar .grip {
    width: 15px;
    background-position-x: 5px;
}
.combo-font {
    width: 168px;
    height: 24px;
    gap: 5px;
    margin-right: 6px;
    background: linear-gradient(#cce8cf, #cce8cf) 2px 50% / 148px 19px no-repeat #fff;
}
.combo-font b {
    padding-left: 6px;
    color: #16706e;
    font: italic 700 14px "Liberation Serif", serif;
}
.combo-size {
    width: 87px;
    height: 24px;
    margin-right: 4px;
}
.letter {
    font: 700 15px "Liberation Sans", "Noto Sans CJK SC", sans-serif;
}
.outline {
    color: #f4f4fa;
    -webkit-text-stroke: 1px #66698a;
}
.slant {
    font-family: "Liberation Serif", serif;
    font-style: italic;
}
.under {
    text-decoration: underline;
}
.wide-a {
    font-size: 18px;
}
.letter.faded {
    font-size: 11px;
    font-weight: 400;
}

/* 插件图标 */
.corelapp {
    font: 700 7px/6px "Liberation Mono", monospace;
    color: #1b1b7d;
}
.numbers {
    display: grid;
    grid-template-columns: 8px 8px;
    grid-auto-rows: 8px;
    place-content: center;
    font: 700 8px/7px "Liberation Sans", sans-serif;
}
.numbers span {
    border: 1px solid #d000d8;
}
.ps {
    color: #3d4373;
    font-size: 12px;
}
.two {
    background: linear-gradient(135deg, transparent 50%, #d98bce 50%) center / 15px 15px no-repeat;
    font-size: 17px;
}
.wen {
    color: #d81c10;
    text-shadow: 1px 0 #f8e000, -1px 0 #f8e000, 0 1px #f8e000, 0 -1px #f8e000;
}
.zi {
    color: #f8e000;
    text-shadow: 1px 0 #333, -1px 0 #333, 0 1px #333, 0 -1px #333;
}

/* 标尺 */
.ruler {
    flex: none;
    display: block;
    width: 100%;
    height: 21px;
    background: #f0f0f0;
    border-bottom: 1px solid #8c8c8c;
}
.ruler text {
    font-size: 10px;
    text-anchor: middle;
}
.ruler .ruler-unit {
    font-size: 12px;
    text-anchor: start;
}

/* 画布 */
.workspace {
    flex: 1;
    min-height: 0;
    display: flex;
}
.canvas {
    flex: 1;
    padding: 199px 0 0 44px;
}
.docker {
    width: 6px;
    margin-top: 19px;
    border: 1px solid #8c8c8c;
    border-width: 1px 0 0 1px;
    background: #ededed;
}
.cards {
    display: grid;
    grid-template-columns: repeat(10, 1fr);
    grid-auto-rows: 75px;
    width: 1372px;
}
.card {
    padding: 11px 0 0 7px;
    background: #fffa00;
    border: 1px solid #3c3c3c;
    margin: 0 -1px -1px 0;
}
.card-top {
    display: flex;
    align-items: flex-start;
    height: 26px;
    gap: 1px;
}
.badge {
    width: 23px;
    height: 26px;
    background: #ec3f00;
    color: #4a4a4a;
    font-size: 14px;
    line-height: 25px;
    text-align: center;
}
.name {
    color: #222;
    font-family: "Noto Sans CJK SC", sans-serif;
    font-size: 29px;
    line-height: 21px;
    white-space: nowrap;
}
.number {
    padding: 7px 0 0 8px;
    color: #333;
    font: 24px/24px "Liberation Sans", Arial, sans-serif;
}

/* 宏窗口 */
.dialog {
    position: absolute;
    top: 37px;
    right: 21px;
    width: 223px;
    padding: 0 6px 6px;
    border: 1px solid #5c6266;
    border-radius: 7px;
    background: linear-gradient(#5e6268, #c3d2d8 12px, #f0fdff 20px, #f0ffff 130px, #fff 160px);
}
.dialog-title {
    display: flex;
    justify-content: space-between;
    height: 27px;
}
.dialog-title h2 {
    margin: 0;
    font-size: 12px;
    font-weight: 400;
    line-height: 26px;
}
.dialog-close {
    width: 47px;
    height: 18px;
    display: flex;
    align-items: center;
    justify-content: center;
    border: 1px solid #e2eaee;
    border-top: none;
    border-radius: 0 0 4px 4px;
    background: linear-gradient(rgba(70, 76, 84, 0.5), rgba(190, 205, 212, 0.5));
}
.dialog-body {
    display: flex;
    flex-direction: column;
    gap: 17px;
    padding: 24px 16px 16px;
    border: 1px solid #7f7f7f;
    background: #f0f0f0;
}
fieldset {
    margin: 0;
    padding: 0 10px 12px 8px;
    border: 2px groove #f0f0f0;
    display: flex;
    flex-direction: column;
    align-items: center;
}
legend {
    padding: 0 4px;
    line-height: 14px;
}
.count-row {
    display: flex;
    align-items: center;
    gap: 9px;
    margin: 15px 0 12px;
}
.count-row input {
    width: 39px;
    height: 20px;
    border: 2px solid;
    border-color: #808080 #fff #fff #808080;
    background: #cce8cf;
    text-align: center;
}
.btn {
    height: 24px;
    border: 2px solid;
    border-color: #fff #7c7c7c #7c7c7c #fff;
    background: #f0f0f0;
}
.count-row .btn {
    width: 32px;
}
.btn-wide {
    width: 136px;
}
.default {
    border: 1px solid #000;
    box-shadow: inset 1px 1px #fff, inset -2px -2px #8c8c8c;
}
.red, .notice {
    color: #f00;
}
.notice {
    align-self: flex-start;
    margin: 10px 0 9px 16px;
    font-size: 14px;
}
.btn-row {
    display: flex;
    gap: 8px;
    margin-top: 16px;
}
.btn-row .btn {
    width: 72px;
}

/* 输入法 */
.ime {
    position: absolute;
    right: 0;
    bottom: 65px;
    width: 277px;
    display: flex;
    align-items: center;
    overflow: hidden;
}
.ime-logo {
    position: relative;
    flex: none;
    width: 27px;
    height: 30px;
}
.ime-icons {
    flex: 1;
    display: flex;
    align-items: center;
    height: 28px;
    margin-left: -10px;
    padding-left: 14px;
    border: 1px solid #a9c9f2;
    border-width: 1px 0;
    background: #fff;
    color: #2f7de1;
    fill: #2f7de1;
}
.ime-icons svg {
    flex: none;
    width: 23px;
    height: 16px;
}
.ime-lang {
    flex: none;
    width: 23px;
    font-size: 16px;
    font-weight: 700;
    text-align: center;
}
.ime-icons .ime-user {
    fill: #bcd4f5;
}

/* 水印 */
.watermark {
    position: absolute;
    right: 2px;
    bottom: 2px;
    display: flex;
    align-items: center;
    gap: 4px;
    filter: drop-shadow(0 0 1px #fff) drop-shadow(1px 1px 1px rgba(0, 0, 0, 0.35));
}
.watermark div {
    display: flex;
    flex-direction: column;
    gap: 3px;
}
.watermark strong {
    color: #f9b45c;
    font: 500 21px/22px "Noto Sans CJK TC", sans-serif;
}
.watermark span {
    color: #777;
    font: 10px/12px "DejaVu Sans", sans-serif;
}
```
FILE: script.js
```js
const names = [
    '林君伟', '林锦思', '林楷风', '林汉杰', '林炜博', '林思萍', '林铱涵', '林诗龄', '林筱雅', '林可鑫',
    '林铭瀚', '林思如', '林棋濠', '林伟坤', '林梓彤', '林煜轩', '林剑英', '林怡瑄', '林梓豪', '林鸿斌',
    '张洋铭', '吴梓睿', '庄怡瑶', '黄衍睿', '文雅萱', '李秋凤', '谭子焓', '李闽', '杨俊梅', '刘午阳',
    '陈锦辉', '李忠芬', '周玉会', '魏政灿', '邓章绒', '韦梦婷', '兰金', '韦浩', '孔维灿', '段龙江',
    '杨铭', '李俊驰', '刘星晨', '廖悦琦', '陈紫焉', '王紫晴', '万叶翔', '姚晨浩', '蒋薇琳', '朱思妤',
    '付靖钧', '张煜轩', '江帅'
];

// 名单卡片
document.getElementById('cards').innerHTML = names.map((name, i) => {
    const no = String(i + 1).padStart(2, '0');
    return `<div class="card">
        <div class="card-top"><span class="badge">${no}</span><span class="name">${name}</span></div>
        <div class="number">202001${no}</div>
    </div>`;
}).join('');

// 标尺刻度, 0 点在 74px, 每 10 毫米约 70.83px
const zero = 74;
const step = 7.083;
let marks = '';
for (let mm = -10; mm <= 243; mm++) {
    const x = Math.round(zero + mm * step);
    const major = mm % 10 === 0;
    marks += `<rect x="${x}" y="${major ? 12 : 16}" width="1" height="${major ? 7 : 2}"/>`;
    if (major) {
        marks += `<text x="${x}" y="11">${Math.abs(mm)}</text>`;
    }
}
marks += '<path d="M835.500 3v16" stroke="#000" stroke-dasharray="3 2"/>';
marks += '<text class="ruler-unit" x="1788" y="12">厘米</text>';
document.getElementById('ruler').innerHTML = marks;
```
